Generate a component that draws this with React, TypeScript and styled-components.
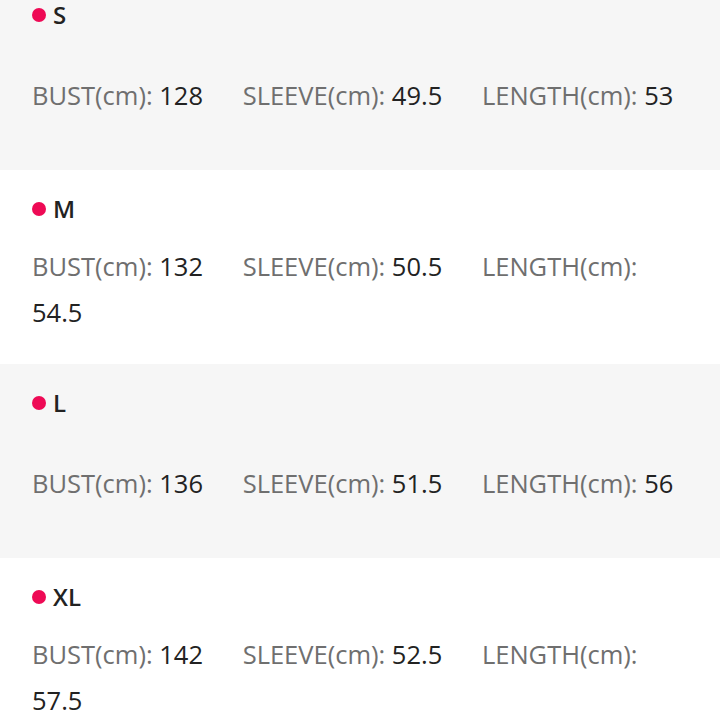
import styled, { createGlobalStyle } from 'styled-components'

const GlobalStyle = createGlobalStyle`
  html, body {
    margin: 0;
    padding: 0;
    background: #ffffff;
  }
  body {
    font-family: "Open Sans", "Noto Sans", Lato, sans-serif;
  }
`

const SizeList = styled.div`
  display: flex;
  flex-direction: column;
  margin-top: -24px;
`

const SizeRow = styled.section<{ $shaded: boolean }>`
  display: flex;
  flex-direction: column;
  height: 194px;
  box-sizing: border-box;
  padding: 27px 32px 7px 32px;
  background-color: ${({ $shaded }) => ($shaded ? '#f6f6f6' : '#ffffff')};
`

const SizeHeading = styled.h3`
  display: flex;
  align-items: center;
  gap: 7px;
  margin: 0;
  height: 24px;
  color: #222222;
  font-size: 24px;
  font-weight: 600;
  line-height: 24px;
`

const Dot = styled.span`
  width: 14px;
  height: 14px;
  border-radius: 50%;
  background-color: #ee0a55;
`

const SpecBody = styled.div`
  flex: 1;
  display: flex;
  align-items: center;
`

const SpecText = styled.p`
  margin: 0;
  font-size: 25.5px;
  line-height: 46px;
`

const Spec = styled.span`
  margin-right: 33px;
  &:last-child {
    margin-right: 0;
  }
`

const SpecLabel = styled.span`
  color: #6f6f6f;
`

const SpecValue = styled.span`
  color: #222222;
`

const sizes = [
  { name: 'S', bust: '128', sleeve: '49.5', length: '53' },
  { name: 'M', bust: '132', sleeve: '50.5', length: '54.5' },
  { name: 'L', bust: '136', sleeve: '51.5', length: '56' },
  { name: 'XL', bust: '142', sleeve: '52.5', length: '57.5' },
]

export default function App() {
  return (
    <>
      <GlobalStyle />
      <SizeList>
        {sizes.map((s, i) => (
          <SizeRow key={s.name} $shaded={i % 2 === 0}>
            <SizeHeading>
              <Dot />
              {s.name}
            </SizeHeading>
            <SpecBody>
              <SpecText>
                <Spec>
                  <SpecLabel>BUST(cm):</SpecLabel> <SpecValue>{s.bust}</SpecValue>
                </Spec>{' '}
                <Spec>
                  <SpecLabel>SLEEVE(cm):</SpecLabel> <SpecValue>{s.sleeve}</SpecValue>
                </Spec>{' '}
                <Spec>
                  <SpecLabel>LENGTH(cm):</SpecLabel> <SpecValue>{s.length}</SpecValue>
                </Spec>
              </SpecText>
            </SpecBody>
          </SizeRow>
        ))}
      </SizeList>
    </>
  )
}
